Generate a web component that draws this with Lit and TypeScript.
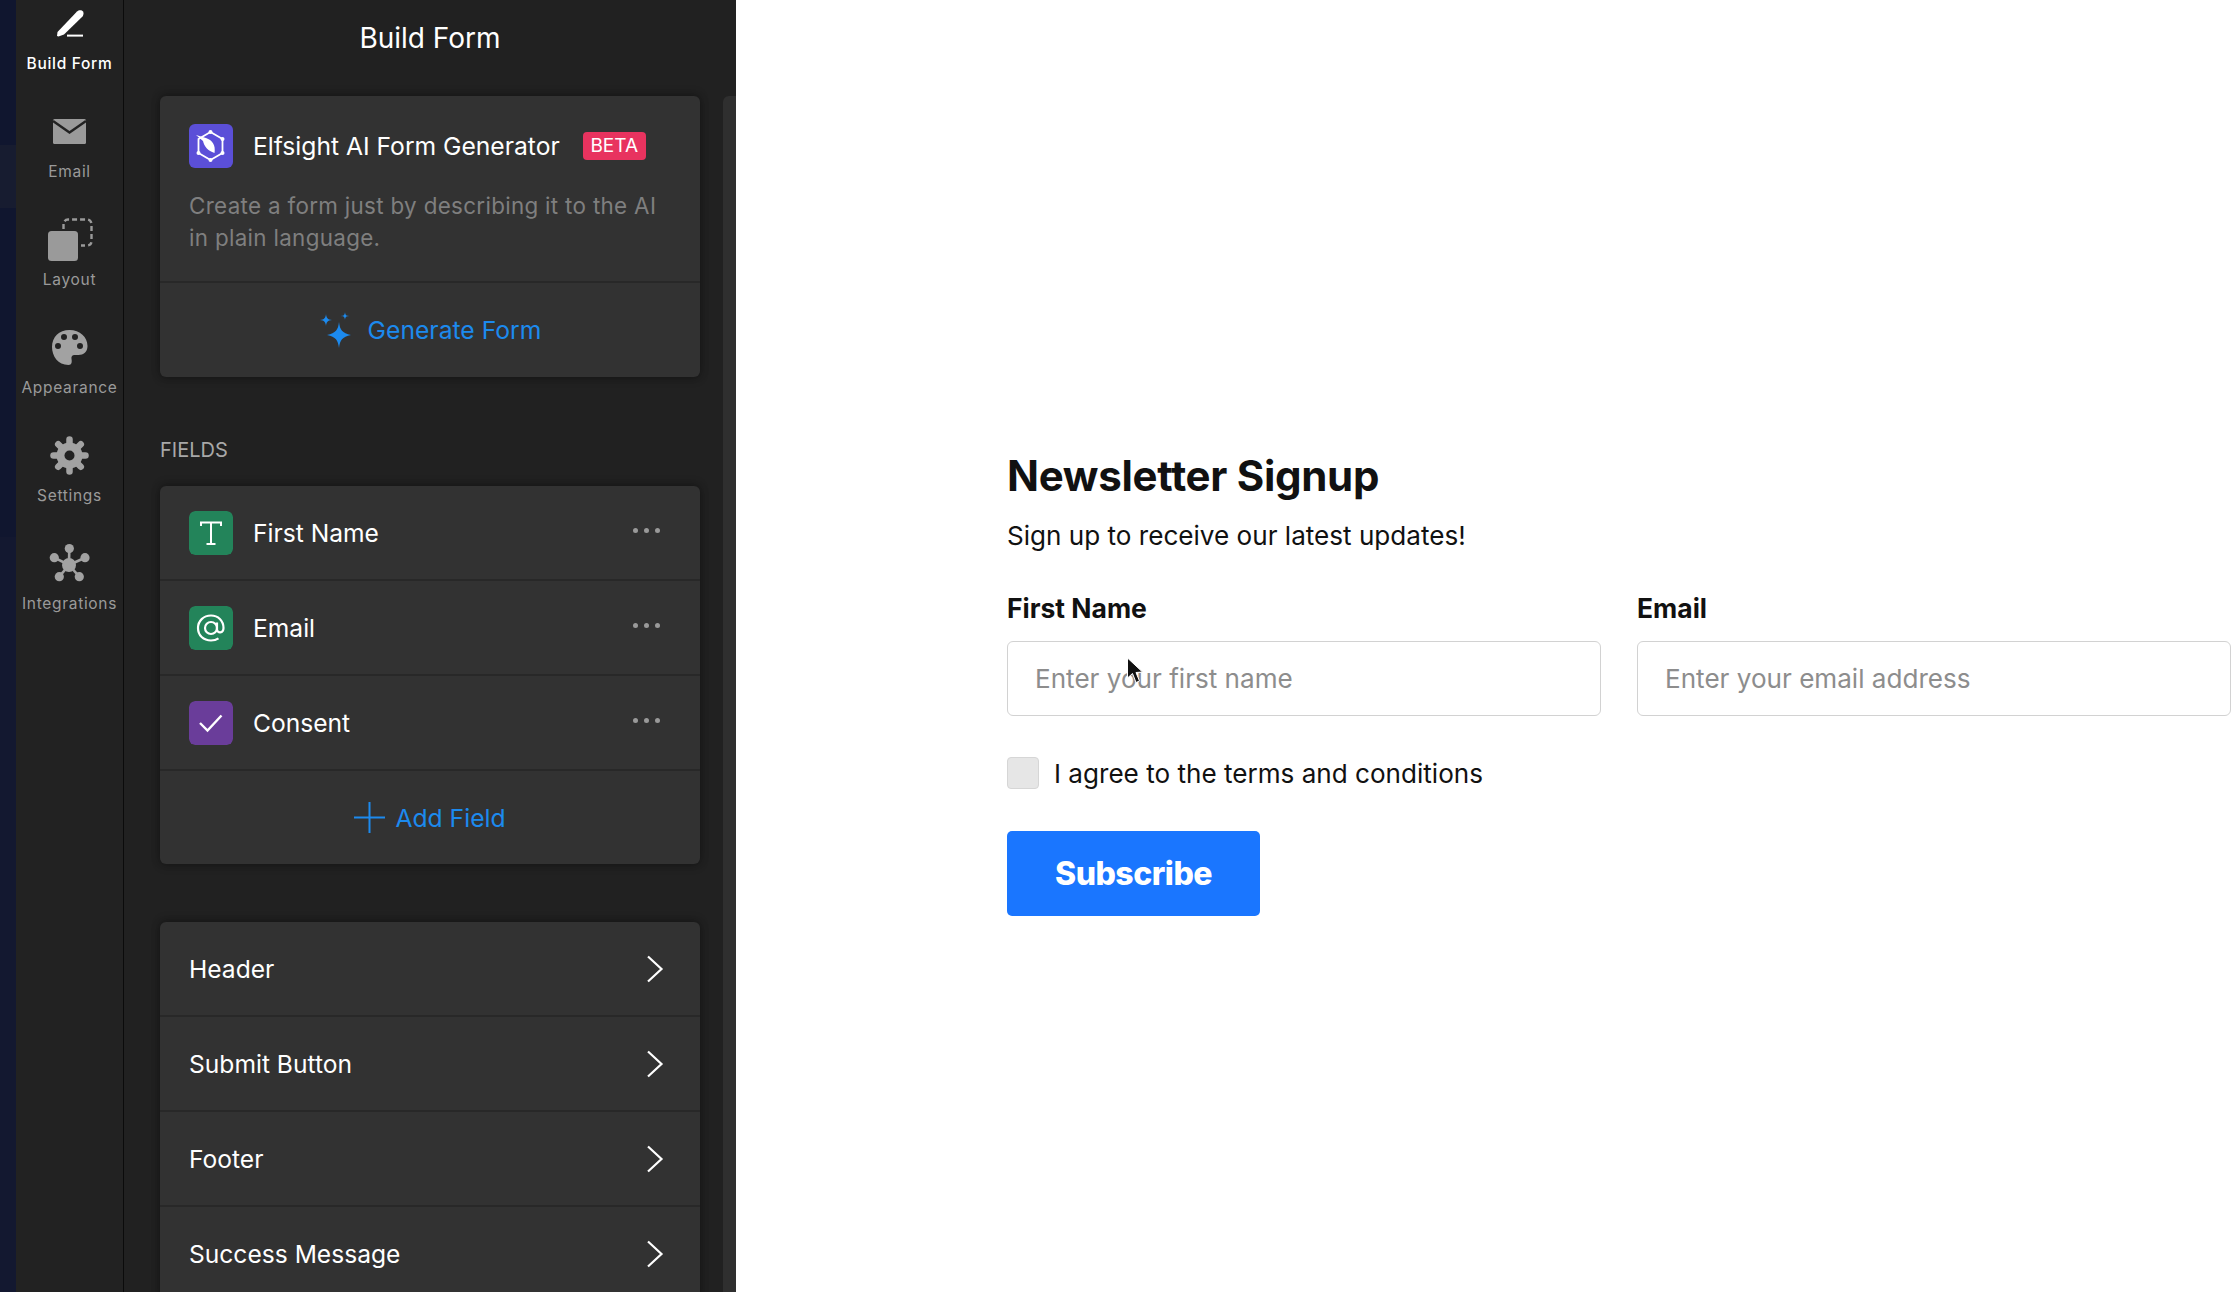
import { LitElement, html, css, svg } from "lit";
import { customElement } from "lit/decorators.js";

const railItems = [
  { label: "Build Form", active: true, icon: svg`<path d="M10 30 L10.5 26 L30 5.5 C32 3.5 35 4 36 5.5 C37 7 36.5 9 35.5 10.5 L17 28.5 L11.5 30.5 Z" fill="#fff"/><rect x="20" y="28.6" width="16" height="2" fill="#fff"/>` },
  { label: "Email", icon: svg`<rect x="6" y="5" width="33" height="25" rx="1.5" fill="#9a9a9a"/><path d="M6 7 L22.5 18.5 L39 7" fill="none" stroke="#222" stroke-width="2.4"/>` },
  { label: "Layout", icon: svg`<rect x="1" y="9" width="30" height="30" rx="3.5" fill="#9a9a9a"/><path d="M16.5 7 V2.5 C16.5 0 18 -2.5 21 -2.5 H40 C43 -2.5 44.5 0 44.5 2.5 V19 C44.5 22 43 23.5 40 23.5 H34" fill="none" stroke="#9a9a9a" stroke-width="2.4" stroke-dasharray="5 3"/>` },
  { label: "Appearance", icon: svg`<path fill="#a2a2a2" fill-rule="evenodd" d="M22.5 0C33 0 40.5 7 40.5 16c0 6-4 9-9 9h-4c-2.5 0-3.5 2-3 4 .5 2.5.5 6-3 6C11 35 5 26 5 17 5 7 12 0 22.5 0zM17 4a3 3 0 1 0 0 6 3 3 0 0 0 0-6zM28 4a3 3 0 1 0 0 6 3 3 0 0 0 0-6zM11 13a3 3 0 1 0 0 6 3 3 0 0 0 0-6zM33 13a3 3 0 1 0 0 6 3 3 0 0 0 0-6z"/>` },
  { label: "Settings", icon: svg`<g stroke="#a2a2a2" stroke-width="6.5" stroke-linecap="round"><line x1="22.5" y1="1.5" x2="22.5" y2="33.5"/><line x1="6.5" y1="17.5" x2="38.5" y2="17.5"/><line x1="11.2" y1="6.2" x2="33.8" y2="28.8"/><line x1="33.8" y1="6.2" x2="11.2" y2="28.8"/></g><circle cx="22.5" cy="17.5" r="13" fill="#a2a2a2"/><circle cx="22.5" cy="17.5" r="5" fill="#222"/>` },
  { label: "Integrations", icon: svg`<g stroke="#a2a2a2" stroke-width="2.6"><line x1="22" y1="19" x2="22.3" y2="2.3"/><line x1="22" y1="19" x2="7.3" y2="11.7"/><line x1="22" y1="19" x2="38" y2="11.7"/><line x1="22" y1="19" x2="12.3" y2="30.7"/><line x1="22" y1="19" x2="32.3" y2="30.7"/></g><g fill="#a2a2a2"><circle cx="22" cy="19" r="7"/><circle cx="22.3" cy="2.6" r="4.6"/><circle cx="7.3" cy="11.7" r="4.6"/><circle cx="38" cy="11.7" r="4.6"/><circle cx="12.3" cy="30.7" r="4.6"/><circle cx="32.3" cy="30.7" r="4.6"/></g>` },
];

const fieldIcons = {
  text: svg`<path d="M12 15 V11.5 H32 V15 M22 11.5 V33 M17.5 33 H26.5" fill="none" stroke="#fff" stroke-width="2"/>`,
  at: svg`<circle cx="22" cy="22" r="6" fill="none" stroke="#fff" stroke-width="2.2"/><path d="M28 16.5 V23.5 C28 27.5 34.5 27.5 34.5 22 C34.5 14.5 29 9.5 22 9.5 C14.5 9.5 9 15 9 22 C9 29.5 14.5 34.5 22 34.5 C25 34.5 27.5 33.7 29.5 32.3" fill="none" stroke="#fff" stroke-width="2.2"/>`,
  check: svg`<path d="M11 22 L18.5 29.5 L32.5 14.5" fill="none" stroke="#fff" stroke-width="2.4"/>`,
};

const chevron = svg`<svg class="chev" width="18" height="28" viewBox="0 0 18 28"><path d="M2 1.5 L15.5 14 L2 26.5" fill="none" stroke="#fff" stroke-width="2.2"/></svg>`;

@customElement("app-root")
export class AppRoot extends LitElement {
  static styles = css`
    :host { display: flex; width: 2240px; height: 1292px; overflow: hidden; position: relative; background: #fff; font-family: Inter, "Liberation Sans", sans-serif; }
    .strip { width: 16px; flex: none; background: linear-gradient(#10162f 0 145px, #171c30 145px 208px, #10162f 208px 537px, #131830 537px); }
    .rail { width: 107px; flex: none; background: #222; border-right: 1px solid #0b0b0b; padding-top: 6px; box-sizing: content-box; }
    .rail-item { height: 108px; display: flex; flex-direction: column; align-items: center; color: #9a9a9a; font-size: 15.5px; letter-spacing: 0.7px; }
    .rail-item svg { display: block; overflow: visible; margin-bottom: 12px; }
    .rail-item.active { color: #fff; font-weight: 500; }
    .rail-item span { line-height: 20px; white-space: nowrap; }
    .panel { width: 612px; flex: none; background: #212121; position: relative; padding: 0 36px; box-sizing: border-box; overflow: hidden; }
    .scroll { position: absolute; right: 0; top: 96px; bottom: 0; width: 13px; background: #2f2f2f; border-radius: 6px 0 0 0; }
    .title { height: 96px; line-height: 76px; text-align: center; font-size: 28px; color: #fff; width: 540px; }
    .card { width: 540px; background: #323232; border-radius: 6px; box-shadow: 0 -2px 8px rgba(0,0,0,.25), 0 2px 8px rgba(0,0,0,.25); }
    .ai { padding: 28px 29px 0; height: 187px; box-sizing: border-box; border-bottom: 2px solid #282828; }
    .ai-head { display: flex; align-items: center; height: 44px; color: #fff; font-size: 24.65px; }
    .ai-head svg { margin-right: 20px; flex: none; }
    .badge { margin-left: 23px; width: 63px; height: 28px; line-height: 28px; text-align: center; background: #e8335f; border-radius: 4px; font-size: 19px; color: #fff; }
    .desc { margin: 22px 0 0; font-size: 22.4px; line-height: 32px; color: #7f7f7f; letter-spacing: 0.32px; }
    .action { display: flex; align-items: center; justify-content: center; color: #1c8aee; font-size: 24.7px; }
    .action.gen { height: 94px; gap: 15px; }
    .action.add { height: 93px; gap: 10px; }
    .section { height: 109px; box-sizing: border-box; padding-top: 60px; font-size: 20px; line-height: 26px; color: #a8a8a8; }
    .row { height: 95px; box-sizing: border-box; border-bottom: 2px solid #282828; display: flex; align-items: center; padding: 0 36px 0 29px; color: #fff; font-size: 24.6px; }
    .row svg.ic { flex: none; margin-right: 20px; border-radius: 6px; }
    .row .grow { flex: 1; }
    .dots { display: flex; gap: 6px; margin-right: 4px; margin-top: -5px; }
    .dots i { width: 5px; height: 5px; border-radius: 50%; background: #9a9a9a; }
    .gap { height: 58px; }
    .main { flex: 1; padding: 452px 0 0 271px; box-sizing: border-box; color: #111; min-width: 0; }
    h1 { margin: 0; font-size: 42px; line-height: 48px; font-weight: 700; letter-spacing: -0.3px; color: #111; }
    .sub { margin: 18px 0 0; font-size: 26.1px; line-height: 36px; color: #111; }
    .cols { display: flex; gap: 36px; margin-top: 38px; }
    .col { width: 594px; }
    label { display: block; font-size: 26.5px; font-weight: 700; line-height: 32px; color: #111; }
    .input { margin-top: 17px; height: 75px; box-sizing: border-box; border: 1.5px solid #d2d2d2; border-radius: 6px; padding-left: 27px; display: flex; align-items: center; font-size: 26.1px; color: #8d8d8d; }
    .agree { display: flex; align-items: center; margin-top: 41px; font-size: 26.1px; color: #111; }
    .box { width: 32px; height: 32px; box-sizing: border-box; background: #e6e6e6; border: 1px solid #d6d6d6; border-radius: 4px; margin-right: 15px; }
    .btn { margin-top: 42px; width: 253px; height: 85px; background: #1a76ff; border-radius: 5px; color: #fff; font-size: 32px; font-weight: 800; letter-spacing: -0.5px; display: flex; align-items: center; justify-content: center; }
    .cursor { position: absolute; left: 1126px; top: 657px; }
  `;

  renderField(name: string, color: string, icon: unknown) {
    return html`<div class="row">
      <svg class="ic" width="44" height="44" viewBox="0 0 44 44"><rect width="44" height="44" rx="6" fill=${color}/>${icon}</svg>
      <span class="grow">${name}</span>
      <div class="dots"><i></i><i></i><i></i></div>
    </div>`;
  }

  render() {
    return html`
      <div class="strip"></div>
      <nav class="rail">
        ${railItems.map((r) => html`<div class="rail-item ${r.active ? "active" : ""}">
          <svg width="45" height="36" viewBox="0 0 45 36">${r.icon}</svg><span>${r.label}</span>
        </div>`)}
      </nav>
      <aside class="panel">
        <div class="scroll"></div>
        <div class="title">Build Form</div>
        <div class="card">
          <div class="ai">
            <div class="ai-head">
              <svg width="44" height="44" viewBox="0 0 44 44">
                <rect width="44" height="44" rx="6" fill="#5b4fd8"/>
                <path d="M21.5 8 L33.5 15 V29 L21.5 36 L9.5 29 V15 Z" fill="none" stroke="#fff" stroke-width="1.8"/>
                <g fill="#fff"><circle cx="21.5" cy="8" r="2"/><circle cx="33.5" cy="15" r="2"/><circle cx="33.5" cy="29" r="2"/><circle cx="21.5" cy="36" r="2"/><circle cx="9.5" cy="29" r="2"/></g>
                <path d="M7 11 L17 14 C23 16 27 21 25.5 29 C19 27 15 22 14 17 Z" fill="#fff"/>
              </svg>
              <span>Elfsight AI Form Generator</span>
              <span class="badge">BETA</span>
            </div>
            <p class="desc">Create a form just by describing it to the AI in plain language.</p>
          </div>
          <div class="action gen">
            <svg width="34" height="36" viewBox="0 0 34 36" fill="#1c8aee">
              <path d="M20 10 C21 18 23 21 32 23 C23 25 21 28 20 36 C19 28 17 25 8 23 C17 21 19 18 20 10Z"/>
              <path d="M7 2 C7.5 6 8.5 7.5 13 8 C8.5 8.5 7.5 10 7 14 C6.5 10 5.5 8.5 1 8 C5.5 7.5 6.5 6 7 2Z"/>
              <path d="M26 0 C26.3 3 27 3.7 30 4 C27 4.3 26.3 5 26 8 C25.7 5 25 4.3 22 4 C25 3.7 25.7 3 26 0Z"/>
            </svg>
            <span>Generate Form</span>
          </div>
        </div>
        <div class="section">FIELDS</div>
        <div class="card">
          ${this.renderField("First Name", "#23845a", fieldIcons.text)}
          ${this.renderField("Email", "#23845a", fieldIcons.at)}
          ${this.renderField("Consent", "#6a3d9a", fieldIcons.check)}
          <div class="action add">
            <svg width="31" height="31" viewBox="0 0 31 31"><path d="M0 15.5 H31 M15.5 0 V31" stroke="#1c8aee" stroke-width="2"/></svg>
            <span>Add Field</span>
          </div>
        </div>
        <div class="gap"></div>
        <div class="card">
          ${["Header", "Submit Button", "Footer", "Success Message"].map((t) => html`<div class="row"><span class="grow">${t}</span>${chevron}</div>`)}
        </div>
      </aside>
      <main class="main">
        <h1>Newsletter Signup</h1>
        <p class="sub">Sign up to receive our latest updates!</p>
        <div class="cols">
          <div class="col"><label>First Name</label><div class="input">Enter your first name</div></div>
          <div class="col"><label>Email</label><div class="input">Enter your email address</div></div>
        </div>
        <div class="agree"><div class="box"></div><span>I agree to the terms and conditions</span></div>
        <div class="btn">Subscribe</div>
      </main>
      <svg class="cursor" width="20" height="30" viewBox="0 0 20 30">
        <path d="M1.5 1 L1.5 21 L6.5 16.5 L10 25.5 L13.5 24 L10 15.5 L16.5 15 Z" fill="#111" stroke="#fff" stroke-width="1"/>
      </svg>
    `;
  }
}
